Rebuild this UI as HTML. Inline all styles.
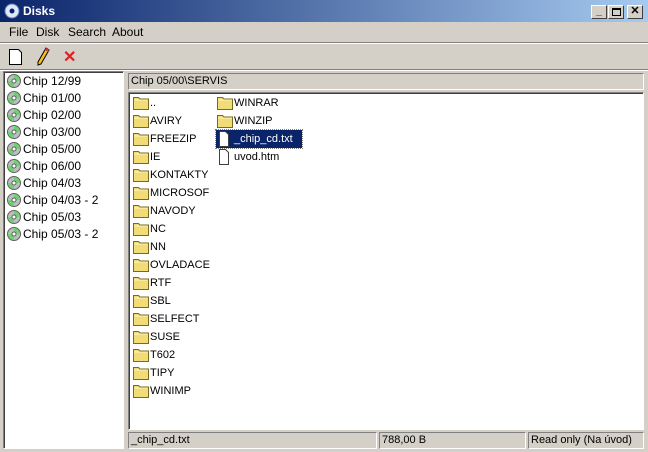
<!DOCTYPE html>
<html><head><meta charset="utf-8"><style>
*{margin:0;padding:0;box-sizing:border-box}
body{width:648px;height:452px;background:#d4d0c8;font-family:"Liberation Sans",sans-serif;font-size:11px;position:relative;overflow:hidden;color:#000}
.abs{position:absolute}
.title{left:0;top:0;width:648px;height:22px;background:linear-gradient(90deg,#0a246a,#a6caf0);color:#fff;font-weight:bold;font-size:12px}
.sunk{border:1px solid;border-color:#808080 #fff #fff #808080;box-shadow:inset 1px 1px 0 #404040}
.tb{width:16px;height:14px;background:#d4d0c8;border:1px solid;border-color:#fff #404040 #404040 #fff;top:5px;font-size:10px;text-align:center;line-height:11px;font-weight:bold;color:#000}
.li{position:absolute;left:3px;height:16px;line-height:16px;font-size:12px}
.li svg{position:absolute;left:0;top:1px}
.li span{position:absolute;left:16px;white-space:nowrap}
.fi{position:absolute;height:17px;line-height:17px;font-size:11px;white-space:nowrap}
.fi svg{position:absolute;left:0;top:0}
.fi span{position:absolute;left:17px}
.st{top:432px;height:17px;border:1px solid;border-color:#808080 #fff #fff #808080;line-height:15px;padding-left:2px;font-size:11px}
</style></head><body>
<svg width="0" height="0" style="position:absolute"><defs>
<symbol id="cd" viewBox="0 0 14 14"><circle cx="7" cy="7" r="6.5" fill="#b8c0c0" stroke="#606060"/><path d="M7 1a6 6 0 0 1 6 6H7z" fill="#70d070"/><path d="M1 7a6 6 0 0 0 6 6V7z" fill="#70d070"/><circle cx="7" cy="7" r="2" fill="#fff" stroke="#606060"/></symbol>
<symbol id="fd" viewBox="0 0 16 15"><path d="M.5 2.5h5l1.5 1.5h8.5v10.5H.5z" fill="#f2dc78" stroke="#7a6a20"/><path d="M1.5 5h13" stroke="#fff6c0"/></symbol>
</defs></svg>
<div class="abs title">
 <svg class="abs" style="left:4px;top:3px" width="16" height="16"><circle cx="8" cy="8" r="7" fill="#dfe8f8" stroke="#6080b0"/><circle cx="8" cy="8" r="2.5" fill="#0a246a"/></svg>
 <span class="abs" style="left:23px;top:4px">Disks</span>
 <div class="abs tb" style="left:591px">_</div>
 <div class="abs tb" style="left:608px"><div style="width:9px;height:8px;border:1px solid #000;border-top-width:2px;margin:2px auto 0"></div></div>
 <div class="abs tb" style="left:627px;font-size:11px">✕</div>
</div>
<div class="abs" style="left:9px;top:25px;font-size:12px">File</div>
<div class="abs" style="left:36px;top:25px;font-size:12px">Disk</div>
<div class="abs" style="left:68px;top:25px;font-size:12px">Search</div>
<div class="abs" style="left:112px;top:25px;font-size:12px">About</div>
<div class="abs" style="left:0;top:42px;width:648px;height:1px;background:#808080"></div>
<div class="abs" style="left:0;top:43px;width:648px;height:1px;background:#fff"></div>
<svg class="abs" style="left:8px;top:48px" width="16" height="18"><path d="M1.5 1.5h9l3 3v12h-12z" fill="#fff" stroke="#000"/></svg>
<svg class="abs" style="left:35px;top:47px" width="16" height="20"><path d="M11 1l3 2-8 14-3 1 0-3z" fill="#f0c020" stroke="#000"/><path d="M11 1l3 2-1 2-3-2z" fill="#d04040"/></svg>
<div class="abs" style="left:63px;top:47px;color:#e02020;font-size:16px;font-weight:bold">✕</div>
<div class="abs" style="left:0;top:69px;width:648px;height:1px;background:#808080"></div>
<div class="abs" style="left:0;top:70px;width:648px;height:1px;background:#fff"></div>
<div class="abs sunk" style="left:3px;top:71px;width:121px;height:378px;background:#fff">
<div class="li" style="top:1px"><svg width="14" height="14"><use href="#cd"/></svg><span>Chip 12/99</span></div>
<div class="li" style="top:18px"><svg width="14" height="14"><use href="#cd"/></svg><span>Chip 01/00</span></div>
<div class="li" style="top:35px"><svg width="14" height="14"><use href="#cd"/></svg><span>Chip 02/00</span></div>
<div class="li" style="top:52px"><svg width="14" height="14"><use href="#cd"/></svg><span>Chip 03/00</span></div>
<div class="li" style="top:69px"><svg width="14" height="14"><use href="#cd"/></svg><span>Chip 05/00</span></div>
<div class="li" style="top:86px"><svg width="14" height="14"><use href="#cd"/></svg><span>Chip 06/00</span></div>
<div class="li" style="top:103px"><svg width="14" height="14"><use href="#cd"/></svg><span>Chip 04/03</span></div>
<div class="li" style="top:120px"><svg width="14" height="14"><use href="#cd"/></svg><span>Chip 04/03 - 2</span></div>
<div class="li" style="top:137px"><svg width="14" height="14"><use href="#cd"/></svg><span>Chip 05/03</span></div>
<div class="li" style="top:154px"><svg width="14" height="14"><use href="#cd"/></svg><span>Chip 05/03 - 2</span></div>
</div>
<div class="abs" style="left:128px;top:73px;width:516px;height:17px;border:1px solid;border-color:#808080 #fff #fff #808080;line-height:15px;padding-left:2px">Chip 05/00\SERVIS</div>
<div class="abs sunk" style="left:128px;top:92px;width:516px;height:338px;background:#fff">
<div class="fi" style="left:4px;top:2px"><svg width="16" height="15"><use href="#fd"/></svg><span>..</span></div>
<div class="fi" style="left:4px;top:20px"><svg width="16" height="15"><use href="#fd"/></svg><span>AVIRY</span></div>
<div class="fi" style="left:4px;top:38px"><svg width="16" height="15"><use href="#fd"/></svg><span>FREEZIP</span></div>
<div class="fi" style="left:4px;top:56px"><svg width="16" height="15"><use href="#fd"/></svg><span>IE</span></div>
<div class="fi" style="left:4px;top:74px"><svg width="16" height="15"><use href="#fd"/></svg><span>KONTAKTY</span></div>
<div class="fi" style="left:4px;top:92px"><svg width="16" height="15"><use href="#fd"/></svg><span>MICROSOF</span></div>
<div class="fi" style="left:4px;top:110px"><svg width="16" height="15"><use href="#fd"/></svg><span>NAVODY</span></div>
<div class="fi" style="left:4px;top:128px"><svg width="16" height="15"><use href="#fd"/></svg><span>NC</span></div>
<div class="fi" style="left:4px;top:146px"><svg width="16" height="15"><use href="#fd"/></svg><span>NN</span></div>
<div class="fi" style="left:4px;top:164px"><svg width="16" height="15"><use href="#fd"/></svg><span>OVLADACE</span></div>
<div class="fi" style="left:4px;top:182px"><svg width="16" height="15"><use href="#fd"/></svg><span>RTF</span></div>
<div class="fi" style="left:4px;top:200px"><svg width="16" height="15"><use href="#fd"/></svg><span>SBL</span></div>
<div class="fi" style="left:4px;top:218px"><svg width="16" height="15"><use href="#fd"/></svg><span>SELFECT</span></div>
<div class="fi" style="left:4px;top:236px"><svg width="16" height="15"><use href="#fd"/></svg><span>SUSE</span></div>
<div class="fi" style="left:4px;top:254px"><svg width="16" height="15"><use href="#fd"/></svg><span>T602</span></div>
<div class="fi" style="left:4px;top:272px"><svg width="16" height="15"><use href="#fd"/></svg><span>TIPY</span></div>
<div class="fi" style="left:4px;top:290px"><svg width="16" height="15"><use href="#fd"/></svg><span>WINIMP</span></div>
<div class="fi" style="left:88px;top:2px"><svg width="16" height="15"><use href="#fd"/></svg><span>WINRAR</span></div>
<div class="fi" style="left:88px;top:20px"><svg width="16" height="15"><use href="#fd"/></svg><span>WINZIP</span></div>
<div class="fi" style="left:87px;top:37px;width:86px;height:18px;background:#0a246a;outline:1px dotted #808080"></div>
<div class="fi" style="left:88px;top:38px;color:#fff"><svg width="14" height="16"><path d="M2.5 .5h6l3 3v12h-9z" fill="#fff" stroke="#404040"/></svg><span>_chip_cd.txt</span></div>
<div class="fi" style="left:88px;top:56px"><svg width="14" height="16"><path d="M2.5 .5h6l3 3v12h-9z" fill="#fff" stroke="#404040"/></svg><span>uvod.htm</span></div>
</div>
<div class="abs st" style="left:128px;width:249px">_chip_cd.txt</div>
<div class="abs st" style="left:379px;width:147px">788,00 B</div>
<div class="abs st" style="left:528px;width:116px">Read only (Na úvod)</div>
</body></html>
